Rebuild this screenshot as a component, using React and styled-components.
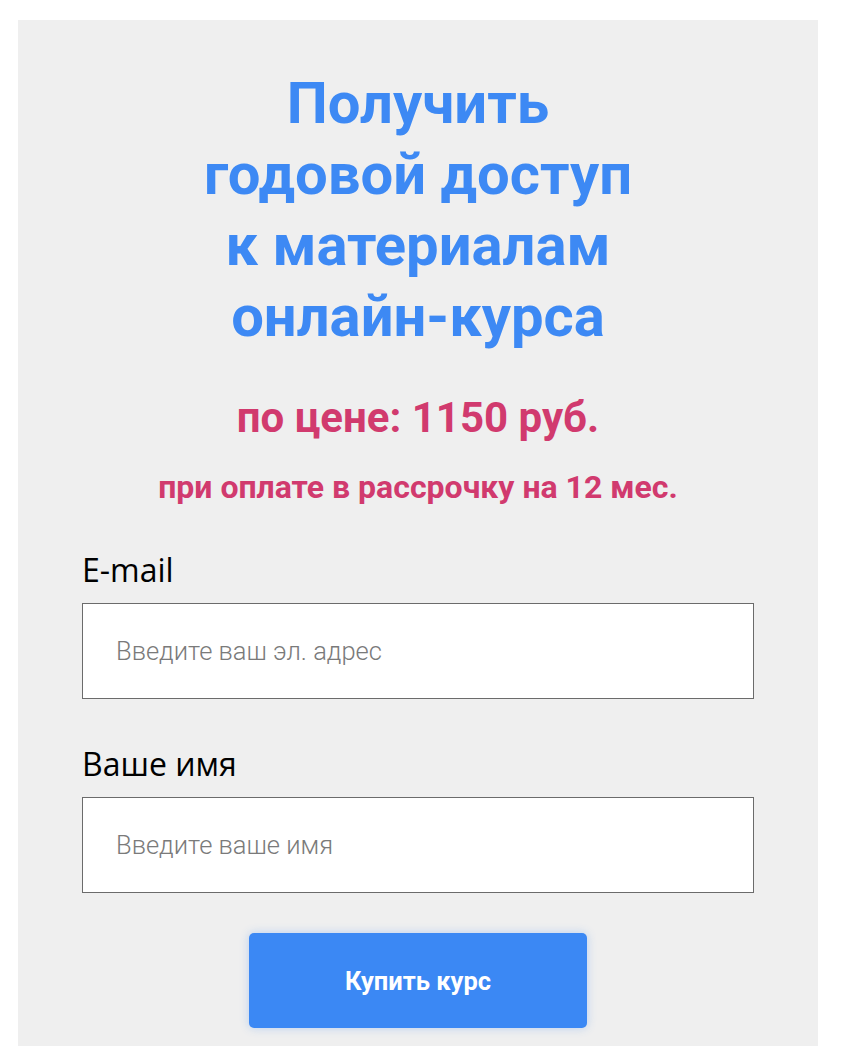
import React from "react";
import styled, {createGlobalStyle} from "styled-components";

const GlobalStyle = createGlobalStyle`
    body {
        margin: 0;
        background: #ffffff;
        font-family: Roboto, "Liberation Sans", sans-serif;
    }
`

const Page = styled.div`
    padding: 20px 23px 0 18px;
`

const Panel = styled.form`
    background: #efefef;
    width: 800px;
    min-height: 1026px;
    box-sizing: border-box;
    padding: 48px 64px 20px 64px;
    display: flex;
    flex-direction: column;
    align-items: center;
`

const Title = styled.h1`
    margin: 0;
    font-family: Roboto, sans-serif;
    font-weight: 700;
    font-size: 58px;
    line-height: 71px;
    color: #3d89f4;
    text-align: center;
`

const Price = styled.p`
    margin: ${props => props.$top}px 0 0;
    font-family: Roboto, sans-serif;
    font-weight: 700;
    font-size: ${props => props.$size}px;
    line-height: ${props => props.$line}px;
    color: #d13a6e;
    text-align: center;
`

const Field = styled.div`
    align-self: stretch;
    display: flex;
    flex-direction: column;
    margin-top: ${props => props.$top}px;
`

const Label = styled.label`
    font-family: "Open Sans", sans-serif;
    font-size: 32px;
    line-height: 44px;
    color: #000000;
    margin-bottom: 11px;
`

const Input = styled.input`
    height: 96px;
    box-sizing: border-box;
    border: 1px solid #6b6b6b;
    background: #ffffff;
    padding: 0 33px;
    font-family: Roboto, sans-serif;
    font-weight: 300;
    font-size: 25.5px;
    color: #333;
    outline: none;

    &::placeholder {
        color: #7a7a7a;
    }
`

const BuyButton = styled.button`
    margin-top: 40px;
    width: 338px;
    height: 95px;
    border: none;
    border-radius: 5px;
    background: #3b88f4;
    color: #ffffff;
    font-family: Roboto, sans-serif;
    font-weight: 700;
    font-size: 25.5px;
    box-shadow: 0 0 10px rgba(59, 136, 244, 0.3);
    cursor: pointer;
`

function App() {
    return (
        <Page>
            <GlobalStyle/>
            <Panel onSubmit={e => e.preventDefault()}>
                <Title>
                    Получить<br/>
                    годовой доступ<br/>
                    к материалам<br/>
                    онлайн-курса
                </Title>
                <Price $size={42} $line={50} $top={41}>по цене: 1150 руб.</Price>
                <Price $size={32} $line={40} $top={24}>при оплате в рассрочку на 12 мес.</Price>

                <Field $top={41}>
                    <Label htmlFor="email">E-mail</Label>
                    <Input id="email" type="email" placeholder="Введите ваш эл. адрес"/>
                </Field>
                <Field $top={43}>
                    <Label htmlFor="name">Ваше имя</Label>
                    <Input id="name" placeholder="Введите ваше имя"/>
                </Field>

                <BuyButton type="submit">Купить курс</BuyButton>
            </Panel>
        </Page>
    );
}

export default App;
